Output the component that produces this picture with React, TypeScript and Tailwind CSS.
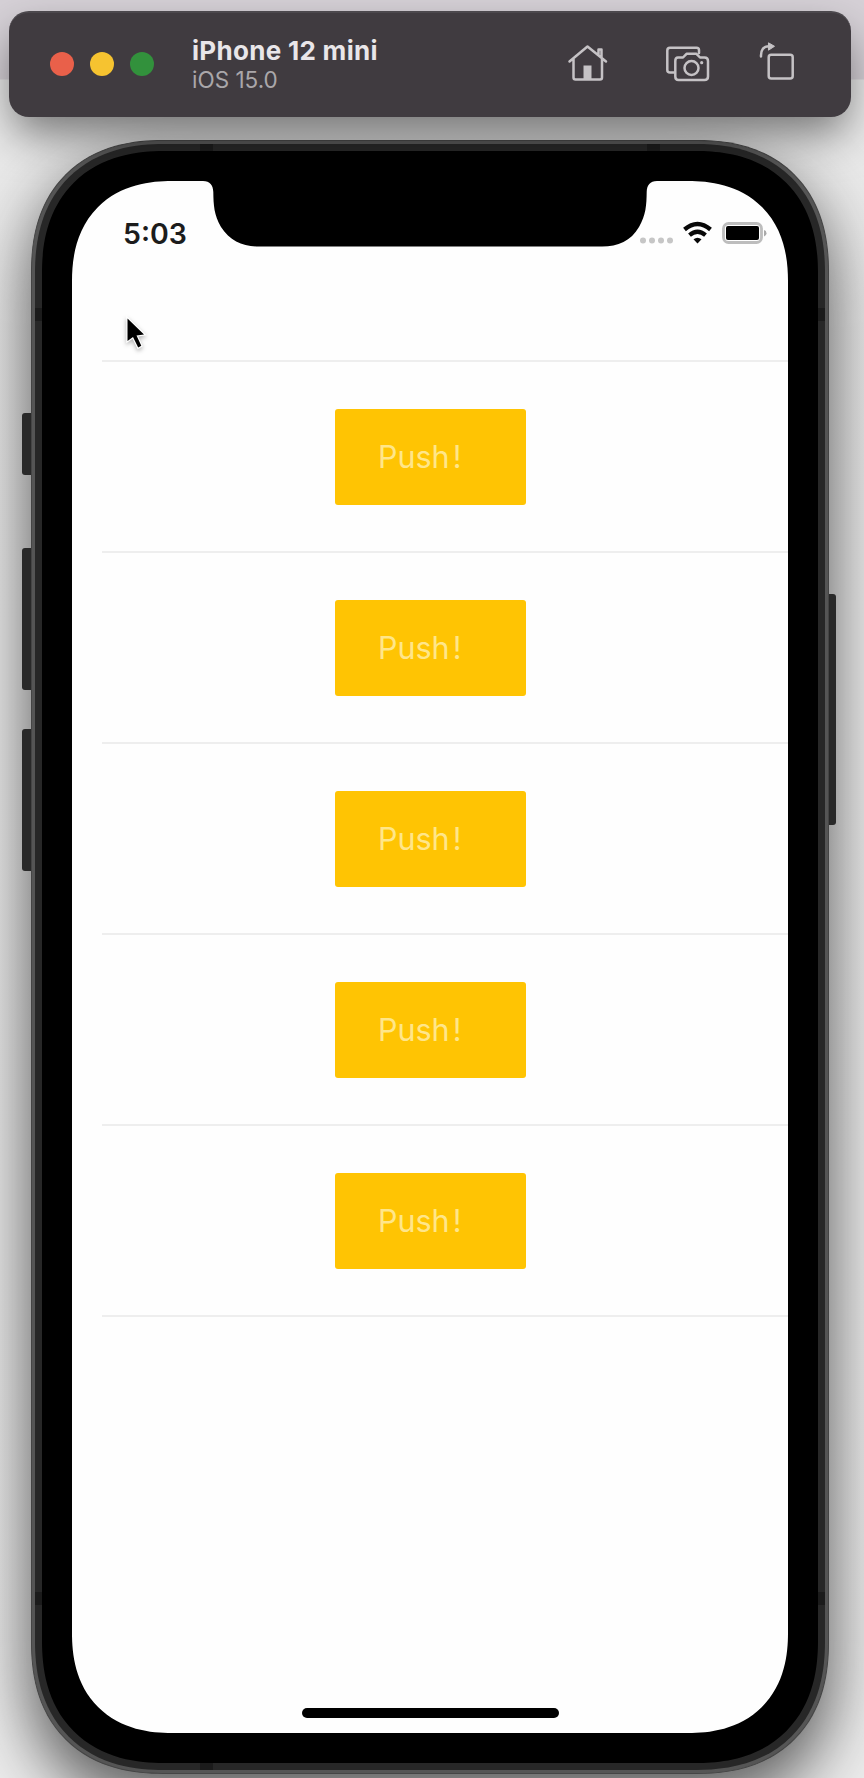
function Toolbar() {
  return (
    <header className="relative z-10 ml-[9px] mr-[13px] flex h-[106px] items-center justify-between rounded-[20px] border-t-2 border-[#4c484d] bg-[#403b40] pl-[41px] pr-[51px] shadow-[0_20px_44px_-4px_rgba(0,0,0,0.5)]">
      <div className="flex items-center gap-[38px]">
        <div className="flex gap-4 pb-[3px]">
          <span className="size-6 rounded-full bg-[#e9604a]" />
          <span className="size-6 rounded-full bg-[#f6c330]" />
          <span className="size-6 rounded-full bg-[#32913c]" />
        </div>
        <div>
          <h1 className="text-[26px] font-bold leading-[30px] tracking-[0.3px] text-[#e9e6e9]">iPhone 12 mini</h1>
          <p className="text-[22.5px] leading-[28px] text-[#aaa7aa]">iOS 15.0</p>
        </div>
      </div>
      <svg className="mb-2 h-20 w-[240px]" viewBox="560 20 240 80" fill="none" stroke="#c5c2c5" strokeWidth="2.5" strokeLinecap="round" strokeLinejoin="round">
        <path d="M569.5 60.5 587.5 45.5 606 60.5M573.5 58V76.5Q573.5 78.5 575.5 78.5H600Q602 78.5 602 76.5V58M598.5 54V48.5H601.5V56.5" />
        <path d="M583.5 64.5H591.5V78H583.5Z" fill="#c5c2c5" stroke="none" />
        <path d="M674 71.5H670Q667.3 71.5 667.3 69V49.5Q667.3 46.7 670 46.7H696.5Q699 46.7 699 49V52" />
        <path d="M678 56.5H683L686.5 52.8H696.5L700 56.5H704.5Q708 56.5 708 60V75.5Q708 79 704.5 79H678.5Q675.3 79 675.3 75.5V60Q675.3 56.5 678 56.5Z" />
        <circle cx="691.5" cy="67" r="7" />
        <circle cx="701.7" cy="61.7" r="1.6" fill="#c5c2c5" stroke="none" />
        <rect x="768.7" y="53.8" width="24" height="23.7" rx="2.5" />
        <path d="M761 55.5Q760.5 45.5 769 45.3" />
        <path d="M768.8 42 774.5 45.3 768.8 49Z" fill="#c5c2c5" strokeWidth="1" />
      </svg>
    </header>
  );
}

function StatusBar() {
  return (
    <div className="relative flex h-[179px] shrink-0 items-start justify-between pl-[51px] pr-4 pt-[35px]">
      <svg className="absolute left-[128px] top-[-1px] h-[68px] w-[460px]" viewBox="200 180 460 68">
        <path d="M200 180V181H203C210 181 213 185 213.3 192C213.5 205 214 215 221 227C230 241 243 246.5 259 246.5H602C618 246.5 631 241 639 227C646 215 646.5 205 646.7 192C647 185 650 181 657 181H660V180Z" fill="#000" />
      </svg>
      <span className="text-[28.5px] font-semibold leading-[36px] text-[#1c1c1c]">5:03</span>
      <svg className="relative h-[40px] w-[140px]" viewBox="632 216 140 40">
        <g fill="#c6c6c6">
          <circle cx="643" cy="240.5" r="3" />
          <circle cx="652" cy="240.5" r="3" />
          <circle cx="661" cy="240.5" r="3" />
          <circle cx="670" cy="240.5" r="3" />
        </g>
        <g fill="none" stroke="#080808" strokeWidth="4.3">
          <path d="M684.5 229.5Q697.5 218.5 710.5 229.5" />
          <path d="M689.5 235.2Q697.5 228.5 705.5 235.2" />
        </g>
        <path d="M693.5 239.3Q697.5 236 701.5 239.3L697.5 243.5Z" fill="#080808" />
        <rect x="723.5" y="223.5" width="38" height="19" rx="5" fill="#fff" stroke="#bdbdbd" strokeWidth="2.8" />
        <rect x="726" y="226" width="33" height="14" rx="2" fill="#000" />
        <path d="M764 230Q766.5 230.5 766.5 233.2Q766.5 236 764 236.5Z" fill="#aaa" />
      </svg>
      <svg className="absolute left-[48px] top-[132px] h-[42px] w-[34px] drop-shadow-[0_2px_2px_rgba(0,0,0,0.3)]" viewBox="120 313 34 42">
        <path d="M127.5 318.5V341L133 337L138.2 347.5L141.3 345.8L136.5 335.5L144 334.5Z" fill="#000" stroke="#fff" strokeWidth="2.4" paintOrder="stroke" />
      </svg>
    </div>
  );
}

function PushRow() {
  return (
    <li className="flex h-[191px] items-center border-b-2 border-[#eeeeee] pl-[233px]">
      <button className="h-24 w-[191px] rounded-[3px] bg-[#ffc403] pl-[43px] text-left text-[30.5px] text-[#ffe68a]">
        Push<span className="ml-[3px]">!</span>
      </button>
    </li>
  );
}

function AntennaBands() {
  return (
    <svg className="absolute inset-0 h-full w-full" viewBox="0 0 796 1632" fill="#1b1b1b">
      <rect x="168" y="3" width="13" height="7" />
      <rect x="615" y="3" width="13" height="7" />
      <rect x="168" y="1622" width="13" height="7" />
      <rect x="3" y="167" width="7" height="13" />
      <rect x="786" y="167" width="7" height="13" />
      <rect x="3" y="1451" width="7" height="13" />
      <rect x="786" y="1451" width="7" height="13" />
    </svg>
  );
}

export default function App() {
  return (
    <main className="flex h-[1778px] w-[864px] flex-col gap-[23px] overflow-hidden bg-[linear-gradient(#d6d1d7_0px,#d6d1d7_79px,#e9e9e9_80px,#ececec_100%)] pt-[11px] font-['Inter',sans-serif]">
      <Toolbar />
      <div className="flex">
        <div className="relative z-10 flex w-[31px] flex-col items-end pt-[273px]">
          <span className="mb-[73px] h-[62px] w-[9px] rounded-l-[3px] bg-[#292929]" />
          <span className="mb-[39px] h-[142px] w-[9px] rounded-l-[3px] bg-[#292929]" />
          <span className="h-[142px] w-[9px] rounded-l-[3px] bg-[#292929]" />
        </div>
        <div className="relative h-[1634px] w-[798px] rounded-[132px] border border-[#454545] bg-[#555] p-[3px] [corner-shape:superellipse(1.2)] shadow-[0_26px_64px_2px_rgba(0,0,0,0.62)]">
          <div className="h-full rounded-[129px] bg-[#272727] p-[7px] [corner-shape:superellipse(1.2)]">
            <div className="h-full rounded-[122px] bg-black p-[30px] [corner-shape:superellipse(1.2)]">
              <section className="flex h-full flex-col overflow-hidden rounded-[100px] bg-[#fefefe] [corner-shape:superellipse(1.2)]">
                <StatusBar />
                <ul className="ml-[30px] border-t-2 border-[#eeeeee]">
                  <PushRow />
                  <PushRow />
                  <PushRow />
                  <PushRow />
                  <PushRow />
                </ul>
                <div className="mx-auto mb-[15px] mt-auto h-[10px] w-[257px] rounded-full bg-black" />
              </section>
            </div>
          </div>
          <AntennaBands />
        </div>
        <div className="relative z-10 pt-[454px]">
          <div className="h-[231px] w-[7px] rounded-r-[3px] bg-[#292929]" />
        </div>
      </div>
    </main>
  );
}
